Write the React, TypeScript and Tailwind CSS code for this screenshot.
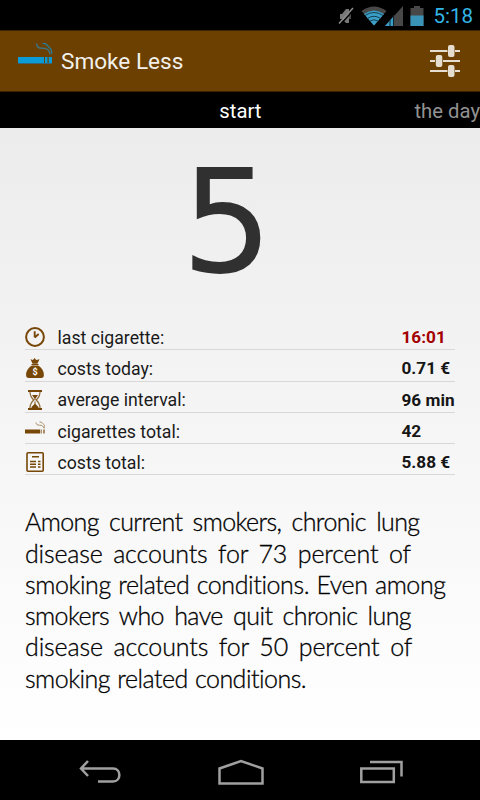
import type { ReactNode } from "react";

const BROWN = "#774708";

function MutedIcon() {
  return (
    <svg width="16" height="18" viewBox="0 0 16 18" fill="none">
      <path d="M2 7h2l4-5h3v14H8l-4-4H2z" fill="#777" />
      <path d="M12 6v6" stroke="#666" strokeWidth="1.500" />
      <path d="M2 18L16 2.500" stroke="#000" strokeWidth="1.500" />
      <path d="M1 16.500L15 1" stroke="#8a8a8a" strokeWidth="1.600" />
    </svg>
  );
}

function WifiIcon() {
  return (
    <svg width="26" height="20" viewBox="0 0 26 20" fill="none">
      <path d="M0.500 5Q13-4 25.500 5L13 19.500z" fill="#484848" />
      <path d="M3 8Q13 1 23 8L13 19.500z" fill="#3a9fc8" />
      <path d="M4 9.500Q13 3.500 22 9.500M6.500 12.500Q13 8 19.500 12.500M9 15Q13 12.500 17 15" stroke="#173e4c" />
    </svg>
  );
}

function SignalIcon() {
  return (
    <svg width="18" height="20" viewBox="0 0 18 20">
      <path d="M18 0v20H0z" fill="#484848" />
      <path d="M8 11v9H0z" fill="#3a9fc8" />
      <path d="M5 13.500v6.500M8.500 9v11" stroke="#0b242e" />
    </svg>
  );
}

function BatteryIcon() {
  return (
    <svg width="14" height="20" viewBox="0 0 14 20">
      <path d="M4 0h6v2h3.500v18H.5V2H4z" fill="#484848" />
      <path d="M.5 9.500h13V20H.5z" fill="#3a94b8" />
    </svg>
  );
}

function LogoIcon() {
  return (
    <svg width="36" height="22" viewBox="0 0 36 22" fill="none">
      <path d="M1 14h26v7H1zM28 14h2.500v7H28zM31.700 14H35v7h-3.300z" fill="#0b9bd5" />
      <path d="M1 20.500h34" stroke="#36637a" />
      <path d="M19.500.5c.3 3.500 2.500 5 6 4.800 4-.2 7 2 7.500 6" stroke="#43717c" strokeWidth="1.500" />
      <path d="M25.500.5c4-.5 4.500 1.800 6 3.300 1.500 1.200 4 2.200 3 7" stroke="#287f9d" strokeWidth="1.300" />
    </svg>
  );
}

function SlidersIcon() {
  return (
    <svg width="30" height="34" viewBox="0 0 30 34">
      <path d="M0 7h17.500M25 7h5M0 17h5M13 17h17M0 27h17.500M25 27h5" stroke="#e6ddd1" strokeWidth="2" />
      <g fill="#e6ddd1">
        <rect x="18" y="1" width="6.500" height="12" rx="2" />
        <rect x="5.800" y="11" width="6.500" height="12" rx="2" />
        <rect x="18" y="21" width="6.500" height="12" rx="2" />
      </g>
    </svg>
  );
}

function ClockIcon() {
  return (
    <svg width="20" height="20" viewBox="0 0 20 20" fill="none">
      <circle cx="10" cy="10" r="8.900" stroke={BROWN} strokeWidth="2" />
      <path d="M9.700 10.500V4.200M9.700 10.500l4-3.500" stroke={BROWN} strokeWidth="1.900" />
    </svg>
  );
}

function MoneyBagIcon() {
  return (
    <svg width="20" height="20" viewBox="0 0 20 20">
      <path d="M5.500 1.200L8 2l1.500-2 1.700 2 3.300-.7-2.100 4.500H7.600z" fill={BROWN} />
      <path d="M6.500 6.500h7" stroke={BROWN} />
      <path d="M7 7.500h6c3.500 2 6.500 6 5.800 10.500-.2 1.300-1 2-2.500 2H3.700c-1.500 0-2.300-.7-2.500-2C.5 13.500 3.500 9.500 7 7.500z" fill={BROWN} />
      <text x="10" y="17" textAnchor="middle" fontSize="9" fontWeight="700" fontFamily="Roboto, sans-serif" fill="#fff">$</text>
    </svg>
  );
}

function HourglassIcon() {
  return (
    <svg width="20" height="20" viewBox="0 0 20 20" fill="none">
      <path d="M3 0h14v2H3zM3 18h14v2H3z" fill={BROWN} />
      <path d="M5 2c0 4 1 5.500 3.800 8C6 12.500 5 14 5 18M15 2c0 4-1 5.500-3.800 8 2.800 2.500 3.800 4 3.800 8" stroke="#8f6a38" strokeWidth="1.200" />
      <path d="M7 5h6l-2.500 3.500v1.500h-1V8.500zM9.500 11.500h1V14l3 3v1h-7v-1l3-3z" fill={BROWN} />
    </svg>
  );
}

function CigaretteIcon() {
  return (
    <svg width="20" height="20" viewBox="0 0 20 20" fill="none">
      <path d="M0 8.500h15v4H0z" fill={BROWN} />
      <path d="M15.500 8.500H17v4h-1.500zM18 8.500h2v4h-2z" fill="#a98c66" />
      <path d="M11 1.500c0 2.200 1.500 2.700 3.500 2.700 2.700 0 4 1 4.300 3M14.500 1c3-.2 2.500 1.500 4 2.200 1.200.6 1.500 2 1.200 4" stroke="#a98c66" />
    </svg>
  );
}

function CalculatorIcon() {
  return (
    <svg width="20" height="20" viewBox="0 0 20 20" fill="none">
      <rect x="2" y=".8" width="16.200" height="18.400" rx="1" stroke={BROWN} strokeWidth="1.600" />
      <path d="M7 4.700h7M5 9.500h6M5 12.300h6M5 15h6M13 9.500h2.500M13 12.300h2.500M13 15h2.500" stroke={BROWN} strokeWidth="1.600" />
    </svg>
  );
}

type Stat = {
  icon: ReactNode;
  label: string;
  value: string;
  alert?: boolean;
};

const stats: Stat[] = [
  { icon: <ClockIcon />, label: "last cigarette:", value: "16:01", alert: true },
  { icon: <MoneyBagIcon />, label: "costs today:", value: "0.71 €" },
  { icon: <HourglassIcon />, label: "average interval:", value: "96 min" },
  { icon: <CigaretteIcon />, label: "cigarettes total:", value: "42" },
  { icon: <CalculatorIcon />, label: "costs total:", value: "5.88 €" },
];

export default function App() {
  return (
    <div className="flex flex-col w-[480px] h-[800px] overflow-hidden bg-black font-['Roboto',sans-serif]">
      <div className="flex h-[30px] shrink-0 items-center justify-end pr-[7px] pt-[2px]">
        <div className="mr-[7px]"><MutedIcon /></div>
        <WifiIcon />
        <div className="-ml-[2px]"><SignalIcon /></div>
        <div className="ml-[7px]"><BatteryIcon /></div>
        <span className="ml-[9px] text-[20.500px] leading-none text-[#33b5e5]">5:18</span>
      </div>

      <header className="flex h-[62px] shrink-0 items-center border-y border-[#3b2400] bg-[#6b4000] pl-[17px] pr-5">
        <div className="mb-[14px]"><LogoIcon /></div>
        <h1 className="ml-2 pt-[2px] text-[22.600px] leading-none text-[#f3f0ec]">Smoke Less</h1>
        <div className="ml-auto"><SlidersIcon /></div>
      </header>

      <nav className="flex h-9 shrink-0 items-center justify-end whitespace-nowrap pt-[2px] text-[20.300px]">
        <span className="text-white">start</span>
        <span className="ml-[153px] text-[#929292]">the day</span>
      </nav>

      <main className="flex h-[612px] shrink-0 flex-col bg-linear-to-b from-[#ececec] to-white px-[25px]">
        <div className="h-[191px] pt-[22px] pr-[26px] text-center font-['DejaVu_Sans',sans-serif] text-[144px] leading-[144px] text-[#303030]">
          5
        </div>

        <ul>
          {stats.map((stat) => (
            <li key={stat.label} className="flex h-[31.250px] items-center border-b border-[#d8d8d8] pt-[8px] text-[17.700px]">
              <div className="mb-[2px] w-5">{stat.icon}</div>
              <span className="ml-[12.500px] w-[344px] shrink-0 text-[#1a1a1a]">{stat.label}</span>
              <span className={stat.alert ? "whitespace-nowrap text-[17.200px] font-bold text-[#a30000]" : "whitespace-nowrap text-[17.200px] font-bold text-[#161616]"}>
                {stat.value}
              </span>
            </li>
          ))}
        </ul>

        <p className="mt-[31px] whitespace-nowrap font-['Lato',sans-serif] text-[25px] font-light leading-[31.250px] text-black [-webkit-text-stroke:0.3px_black]">
          <span className="block tracking-[-0.61px] [word-spacing:4px]">Among current smokers, chronic lung</span>
          <span className="block tracking-[-0.17px] [word-spacing:4px]">disease accounts for 73 percent of</span>
          <span className="block tracking-[-0.41px] [word-spacing:1px]">smoking related conditions. Even among</span>
          <span className="block tracking-[-0.57px] [word-spacing:4px]">smokers who have quit chronic lung</span>
          <span className="block tracking-[-0.13px] [word-spacing:4px]">disease accounts for 50 percent of</span>
          <span className="block tracking-[-0.52px] [word-spacing:1px]">smoking related conditions.</span>
        </p>
      </main>

      <footer className="flex h-[60px] shrink-0 items-center justify-between pl-[79px] pr-[77px] pt-[3px]">
        <svg width="42" height="24" viewBox="0 0 42 24" fill="none" stroke="#a0a0a0" strokeWidth="2.500">
          <path d="M9 1L2 8.500 9 16M2 8.500h32c8.500 0 8.500 13 0 13H19" />
        </svg>
        <svg width="46" height="26" viewBox="0 0 46 26" fill="none" stroke="#a0a0a0" strokeWidth="2.500">
          <path d="M1.500 24.500V9.500L23 2l21.500 7.500v15z" />
        </svg>
        <svg width="43" height="24" viewBox="0 0 43 24" fill="none" stroke="#a0a0a0" strokeWidth="2.500">
          <path d="M1.300 8.500h32.500v13.500H1.300zM10 2h31.500v14.500" />
        </svg>
      </footer>
    </div>
  );
}
